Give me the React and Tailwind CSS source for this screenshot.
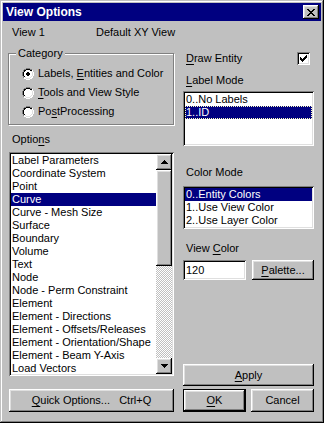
import React from 'react';

const raised = 'bg-[#c0c0c0] shadow-[inset_-1px_-1px_#000,inset_1px_1px_#fff,inset_-2px_-2px_#808080,inset_2px_2px_#dfdfdf]';
const sunken = 'bg-white shadow-[inset_1px_1px_#808080,inset_-1px_-1px_#fff,inset_2px_2px_#000,inset_-2px_-2px_#dfdfdf]';

const U = ({ children }) => <span className="underline underline-offset-2">{children}</span>;

const Radio = ({ checked }) => (
  <svg width="12" height="12" viewBox="0 0 12 12" shapeRendering="crispEdges" className="shrink-0">
    <circle cx="6" cy="6" r="5.5" fill="#fff" />
    <path d="M4 0h4v1H4zM2 1h2v1H2zM8 1h2v1H8zM1 2h1v2H1zM0 4h1v4H0zM1 8h1v2H1z" fill="#808080" />
    <path d="M4 1h4v1H4zM2 2h2v1H2zM8 2h2v1H8zM2 3h1v1H2zM1 4h1v4H1zM2 8h1v1H2z" fill="#000" />
    <path d="M10 2h1v2h-1zM11 4h1v4h-1zM10 8h1v2h-1zM8 10h2v1H8zM4 11h4v1H4zM2 10h2v1H2z" fill="#fff" />
    <path d="M9 3h1v1H9zM10 4h1v4h-1zM9 8h1v1H9zM8 9h1v1H8zM4 10h4v1H4zM3 9h1v1H3z" fill="#dfdfdf" />
    {checked && <path d="M5 4h2v1h1v2H7v1H5V7H4V5h1z" fill="#000" />}
  </svg>
);

const ListBox = ({ items, selected, focus, className, scroll }) => (
  <div className={`${sunken} p-[2px] overflow-hidden flex ${className}`}>
    <div className="flex-1 flex flex-col min-w-0">
      {items.map((it, i) => (
        <div
          key={i}
          className={`h-[13px] leading-[13px] pl-px whitespace-nowrap shrink-0 ${
            i === selected ? 'bg-[#000080] text-white' : ''
          } ${i === selected && focus ? 'outline-1 outline-dotted outline-[#ffffc0] -outline-offset-1' : ''}`}
        >
          {it}
        </div>
      ))}
    </div>
    {scroll && (
      <div className="w-[16px] flex flex-col shrink-0">
        <div className={`${raised} h-[16px] flex items-center justify-center`}>
          <svg width="7" height="4" viewBox="0 0 7 4" shapeRendering="crispEdges">
            <path d="M3 0h1v1h1v1h1v1h1v1H0V3h1V2h1V1h1z" fill="#000" />
          </svg>
        </div>
        <div className={`${raised} h-[96px]`} />
        <div className="flex-1 bg-[repeating-conic-gradient(#c0c0c0_0%_25%,#fff_0%_50%)] bg-[length:2px_2px]" />
        <div className={`${raised} h-[16px] flex items-center justify-center`}>
          <svg width="7" height="4" viewBox="0 0 7 4" shapeRendering="crispEdges">
            <path d="M0 0h7v1H6v1H5v1H4v1H3V3H2V2H1V1H0z" fill="#000" />
          </svg>
        </div>
      </div>
    )}
  </div>
);

const options = [
  'Label Parameters',
  'Coordinate System',
  'Point',
  'Curve',
  'Curve - Mesh Size',
  'Surface',
  'Boundary',
  'Volume',
  'Text',
  'Node',
  'Node - Perm Constraint',
  'Element',
  'Element - Directions',
  'Element - Offsets/Releases',
  'Element - Orientation/Shape',
  'Element - Beam Y-Axis',
  'Load Vectors',
];

export default function App() {
  return (
    <div className="w-[324px] h-[423px] bg-[#c0c0c0] p-[3px] flex flex-col text-[11px] text-black font-['Liberation_Sans',Arial,sans-serif] shadow-[inset_-1px_-1px_#000,inset_1px_1px_#c0c0c0,inset_-2px_-2px_#808080,inset_2px_2px_#fff]">
      {/* title bar */}
      <div className="h-[18px] bg-[#000080] flex items-center pl-[3px] pr-[2px]">
        <span className="flex-1 text-white font-bold text-[12px] leading-none">View Options</span>
        <div className={`${raised} w-[16px] h-[14px] flex items-center justify-center`}>
          <svg width="8" height="7" viewBox="0 0 8 7" shapeRendering="crispEdges">
            <path d="M0 0h2v1h1v1h2V1h1V0h2v1H7v1H6v1H5v1h1v1h1v1h1v1H6V6H5V5H3v1H2v1H0V6h1V5h1V4h1V3H2V2H1V1H0z" fill="#000" />
          </svg>
        </div>
      </div>

      {/* header */}
      <div className="flex mt-[5px] h-[13px] leading-[13px]">
        <span className="ml-[9px] w-[84px]">View 1</span>
        <span>Default XY View</span>
      </div>

      <div className="flex flex-1 mt-[8px] pl-[5px] pr-[7px] pb-[8px] gap-[9px]">
        {/* left column */}
        <div className="w-[166px] flex flex-col">
          <div className="relative mt-[6px] h-[72px] border border-[#808080] shadow-[1px_1px_0_#fff,inset_1px_1px_0_#fff] flex flex-col pl-[13px] pt-[13px] gap-[6px]">
            <span className="absolute -top-[7px] left-[7px] bg-[#c0c0c0] px-[2px] leading-[13px]">Category</span>
            <div className="flex items-center gap-[4px] h-[13px]">
              <Radio checked />
              <span>
                Labels, <U>E</U>ntities and Color
              </span>
            </div>
            <div className="flex items-center gap-[4px] h-[13px]">
              <Radio />
              <span>
                <U>T</U>ools and View Style
              </span>
            </div>
            <div className="flex items-center gap-[4px] h-[13px]">
              <Radio />
              <span>
                Po<U>s</U>tProcessing
              </span>
            </div>
          </div>

          <div className="mt-[8px] ml-[4px] h-[13px] leading-[13px]">
            Optio<U>n</U>s
          </div>

          <ListBox items={options} selected={3} scroll className="mt-[6px] ml-px h-[224px]" />

          <div className="flex-1" />
          <button className={`${raised} ml-px h-[23px] flex items-center justify-center`}>
            <U>Q</U>uick Options...&nbsp;&nbsp; Ctrl+Q
          </button>
        </div>

        {/* right column */}
        <div className="flex-1 flex flex-col">
          <div className="flex items-center h-[13px] mt-[5px] pl-[3px]">
            <span className="flex-1">
              <U>D</U>raw Entity
            </span>
            <div className={`${sunken} w-[13px] h-[13px] mr-[4px] flex items-center justify-center`}>
              <svg width="7" height="7" viewBox="0 0 7 7" shapeRendering="crispEdges">
                <path d="M6 0h1v3H6v1H5v1H4v1H3v1H2V6H1V5H0V2h1v1h1v1h1V3h1V2h1V1h1z" fill="#000" />
              </svg>
            </div>
          </div>
          <div className="mt-[9px] pl-[3px] h-[13px] leading-[13px]">
            <U>L</U>abel Mode
          </div>
          <ListBox items={['0..No Labels', '1..ID']} selected={1} focus className="mt-[4px] h-[55px]" />

          <div className="mt-[20px] pl-[3px] h-[13px] leading-[13px]">Color Mode</div>
          <ListBox
            items={['0..Entity Colors', '1..Use View Color', '2..Use Layer Color']}
            selected={0}
            className="mt-[7px] h-[43px]"
          />

          <div className="mt-[13px] pl-[3px] h-[13px] leading-[13px]">
            View <U>C</U>olor
          </div>
          <div className="flex mt-[5px] gap-[6px]">
            <div className={`${sunken} w-[63px] h-[20px] flex items-center pl-[3px]`}>120</div>
            <button className={`${raised} flex-1 h-[20px] flex items-center justify-center`}>
              <U>P</U>alette...
            </button>
          </div>

          <div className="flex-1" />
          <button className={`${raised} h-[22px] flex items-center justify-center`}>
            <U>A</U>pply
          </button>
          <div className="flex mt-[3px] gap-[5px]">
            <button className={`w-[63px] h-[23px] border border-black p-0 flex`}>
              <span className={`${raised} flex-1 flex items-center justify-center`}>
                <U>O</U>K
              </span>
            </button>
            <button className={`${raised} flex-1 h-[23px] flex items-center justify-center`}>Cancel</button>
          </div>
        </div>
      </div>
    </div>
  );
}
